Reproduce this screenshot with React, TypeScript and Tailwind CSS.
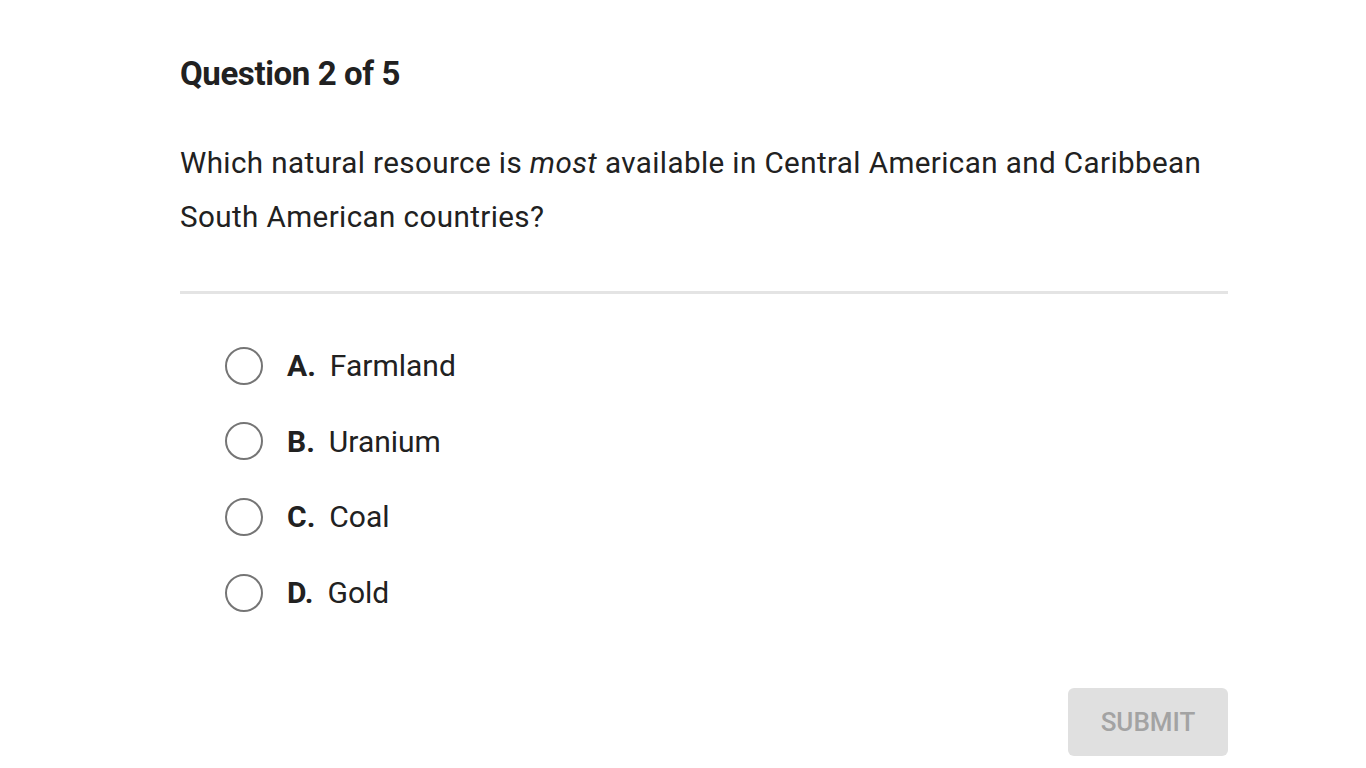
import React, { useState } from "react";

const options = [
  { key: "A", label: "Farmland" },
  { key: "B", label: "Uranium" },
  { key: "C", label: "Coal" },
  { key: "D", label: "Gold" },
];

function App() {
  const [picked, setPicked] = useState<string | null>(null);

  return (
    <div className="min-h-screen bg-white font-['Roboto',sans-serif] text-[#212121]">
      <div className="ml-[180px] w-[1048px] pt-[53px]">
        <h1 className="text-[33px] font-bold leading-[42px] tracking-[-0.4px]">
          Question 2 of 5
        </h1>
        <p className="mt-[41px] text-[29.6px] leading-[54px] tracking-[0.4px]">
          Which natural resource is <em>most</em> available in Central American
          and Caribbean South American countries?
        </p>
        <div className="mt-[47px] h-[3px] bg-[#e4e4e4]" />
        <ul className="ml-[45px] mt-[34px] flex flex-col">
          {options.map((o) => (
            <li key={o.key} className="flex h-[75.6px] items-center">
              <button
                type="button"
                onClick={() => setPicked(o.key)}
                className="flex items-center"
              >
                <span className="flex h-[38px] w-[38px] items-center justify-center rounded-full border-[2.5px] border-[#757575]">
                  {picked === o.key && (
                    <span className="h-[20px] w-[20px] rounded-full bg-[#757575]" />
                  )}
                </span>
                <span className="ml-[24px] text-[30px] font-bold">{o.key}.</span>
                <span className="ml-[14px] text-[30px]">{o.label}</span>
              </button>
            </li>
          ))}
        </ul>
        <div className="mt-[58px] flex justify-end">
          <button
            type="button"
            disabled={!picked}
            className="h-[68px] w-[160px] rounded-[6px] bg-[#e0e0e0] text-[26px] font-medium text-[#a3a3a3]"
          >
            SUBMIT
          </button>
        </div>
      </div>
    </div>
  );
}

export default App;
